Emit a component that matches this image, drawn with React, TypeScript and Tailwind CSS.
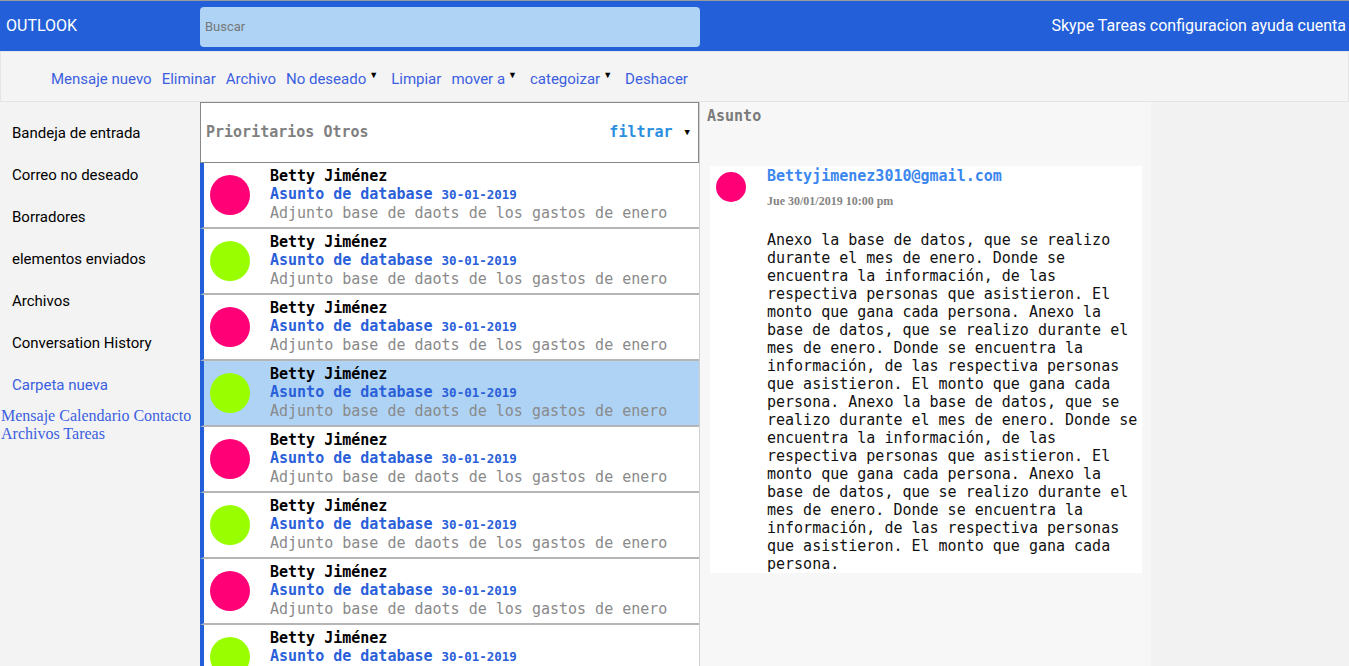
import React from 'react';

const mono = "font-['DejaVu_Sans_Mono','Liberation_Mono',monospace]";

const toolbar: { label: string; menu?: boolean }[] = [
    { label: 'Mensaje nuevo' },
    { label: 'Eliminar' },
    { label: 'Archivo' },
    { label: 'No deseado', menu: true },
    { label: 'Limpiar' },
    { label: 'mover a', menu: true },
    { label: 'categoizar', menu: true },
    { label: 'Deshacer' },
];

const folders = [
    'Bandeja de entrada',
    'Correo no deseado',
    'Borradores',
    'elementos enviados',
    'Archivos',
    'Conversation History',
];

const body =
    'Anexo la base de datos, que se realizo durante el mes de enero. Donde se encuentra la información, de las respectiva personas que asistieron. El monto que gana cada persona. Anexo la base de datos, que se realizo durante el mes de enero. Donde se encuentra la información, de las respectiva personas que asistieron. El monto que gana cada persona. Anexo la base de datos, que se realizo durante el mes de enero. Donde se encuentra la información, de las respectiva personas que asistieron. El monto que gana cada persona. Anexo la base de datos, que se realizo durante el mes de enero. Donde se encuentra la información, de las respectiva personas que asistieron. El monto que gana cada persona.';

function MailRow({ pink, active }: { pink: boolean; active?: boolean }) {
    return (
        <div
            className={`flex items-center h-[66px] shrink-0 border-l-4 border-l-[#235fd9] border-b-2 border-b-[#b5b5b5] ${
                active ? 'bg-[#aed3f5]' : 'bg-white'
            }`}
        >
            <div className={`w-10 h-10 rounded-full ml-[6px] shrink-0 ${pink ? 'bg-[#ff0077]' : 'bg-[#99ff00]'}`} />
            <div className={`ml-5 ${mono} text-[15px] leading-[18px] -mt-[1px]`}>
                <div className="font-bold text-black">Betty Jiménez</div>
                <div className="font-bold text-[#2a5fd9]">
                    Asunto de database <span className="text-[12.5px]">30-01-2019</span>
                </div>
                <div className="text-[#8a8a8a] whitespace-nowrap">Adjunto base de daots de los gastos de enero</div>
            </div>
        </div>
    );
}

export default function App() {
    return (
        <div className="w-[1349px] h-[666px] overflow-hidden bg-[#f2f2f2] font-['Roboto',sans-serif] flex flex-col">
            {/* Top bar */}
            <header className="h-[51px] shrink-0 border-t border-[#9a9a9a] bg-[#235fd9] flex items-center text-white">
                <div className="w-[200px] pl-[6px] text-[16px]">OUTLOOK</div>
                <div className="w-[500px] h-10 rounded-[4px] bg-[#aed3f5] flex items-center pl-[5px] text-[13px] text-[#777] mt-[1px]">
                    Buscar
                </div>
                <div className="ml-auto pr-[3px] text-[16px]">Skype Tareas configuracion ayuda cuenta</div>
            </header>

            {/* Toolbar */}
            <nav className="h-[51px] shrink-0 border border-[#e4e4e4] bg-[#f4f4f4] flex items-center pl-[50px] pt-[5px] text-[15px] text-[#3b5fe0]">
                {toolbar.map((t) => (
                    <span key={t.label} className={`flex items-center ${t.menu ? 'mr-[13px]' : 'mr-[10px]'}`}>
                        {t.label}
                        {t.menu && <span className="text-black text-[9px] ml-[3px] -mt-[6px]">▼</span>}
                    </span>
                ))}
            </nav>

            <div className="flex flex-1 min-h-0">
                {/* Folders */}
                <aside className="w-[200px] shrink-0 bg-[#f3f3f3] pt-[10px]">
                    {folders.map((f) => (
                        <div key={f} className="pl-3 leading-[42px] text-[15px] text-black">
                            {f}
                        </div>
                    ))}
                    <div className="pl-3 leading-[42px] text-[15px] text-[#3b5fe0]">Carpeta nueva</div>
                    <div className="font-['Liberation_Serif',serif] text-[16px] leading-[18px] text-[#3b5fe0] pl-[1px] mt-[1px]">
                        Mensaje Calendario Contacto Archivos Tareas
                    </div>
                </aside>

                {/* Message list */}
                <section className="w-[500px] shrink-0 flex flex-col border-r border-[#d0d0d0] bg-white">
                    <div className={`h-[61px] shrink-0 border border-[#888] bg-white flex items-center pl-[5px] pr-[8px] ${mono} text-[15px] font-bold`}>
                        <span className="text-[#808080]">Prioritarios Otros</span>
                        <span className="ml-auto text-[#2b8fe0]">filtrar</span>
                        <span className="ml-[12px] text-[9px] text-black">▼</span>
                    </div>
                    {[0, 1, 2, 3, 4, 5, 6, 7].map((i) => (
                        <MailRow key={i} pink={i % 2 === 0} active={i === 3} />
                    ))}
                </section>

                {/* Reading pane */}
                <section className="w-[451px] shrink-0 bg-[#f7f7f7] pl-[10px] pr-[9px]">
                    <div className={`${mono} text-[15px] font-bold text-[#7a7a7a] pt-[4px] -ml-[3px] leading-[20px]`}>Asunto</div>
                    <div className="mt-[40px] bg-white flex">
                        <div className="w-[30px] h-[30px] rounded-full bg-[#ff0077] ml-[6px] mt-[6px] shrink-0" />
                        <div className="ml-[21px] pt-[1px]">
                            <div className={`${mono} text-[15px] leading-[18px] font-bold text-[#3b87ee]`}>
                                Bettyjimenez3010@gmail.com
                            </div>
                            <div className="font-['Liberation_Serif',serif] text-[12px] font-bold text-[#858585] mt-[9px] leading-[14px]">
                                Jue 30/01/2019 10:00 pm
                            </div>
                            <p className={`${mono} text-[15px] leading-[18px] text-[#111] mt-[23px] w-[372px]`}>{body}</p>
                        </div>
                    </div>
                </section>

                <div className="flex-1" />
            </div>
        </div>
    );
}
